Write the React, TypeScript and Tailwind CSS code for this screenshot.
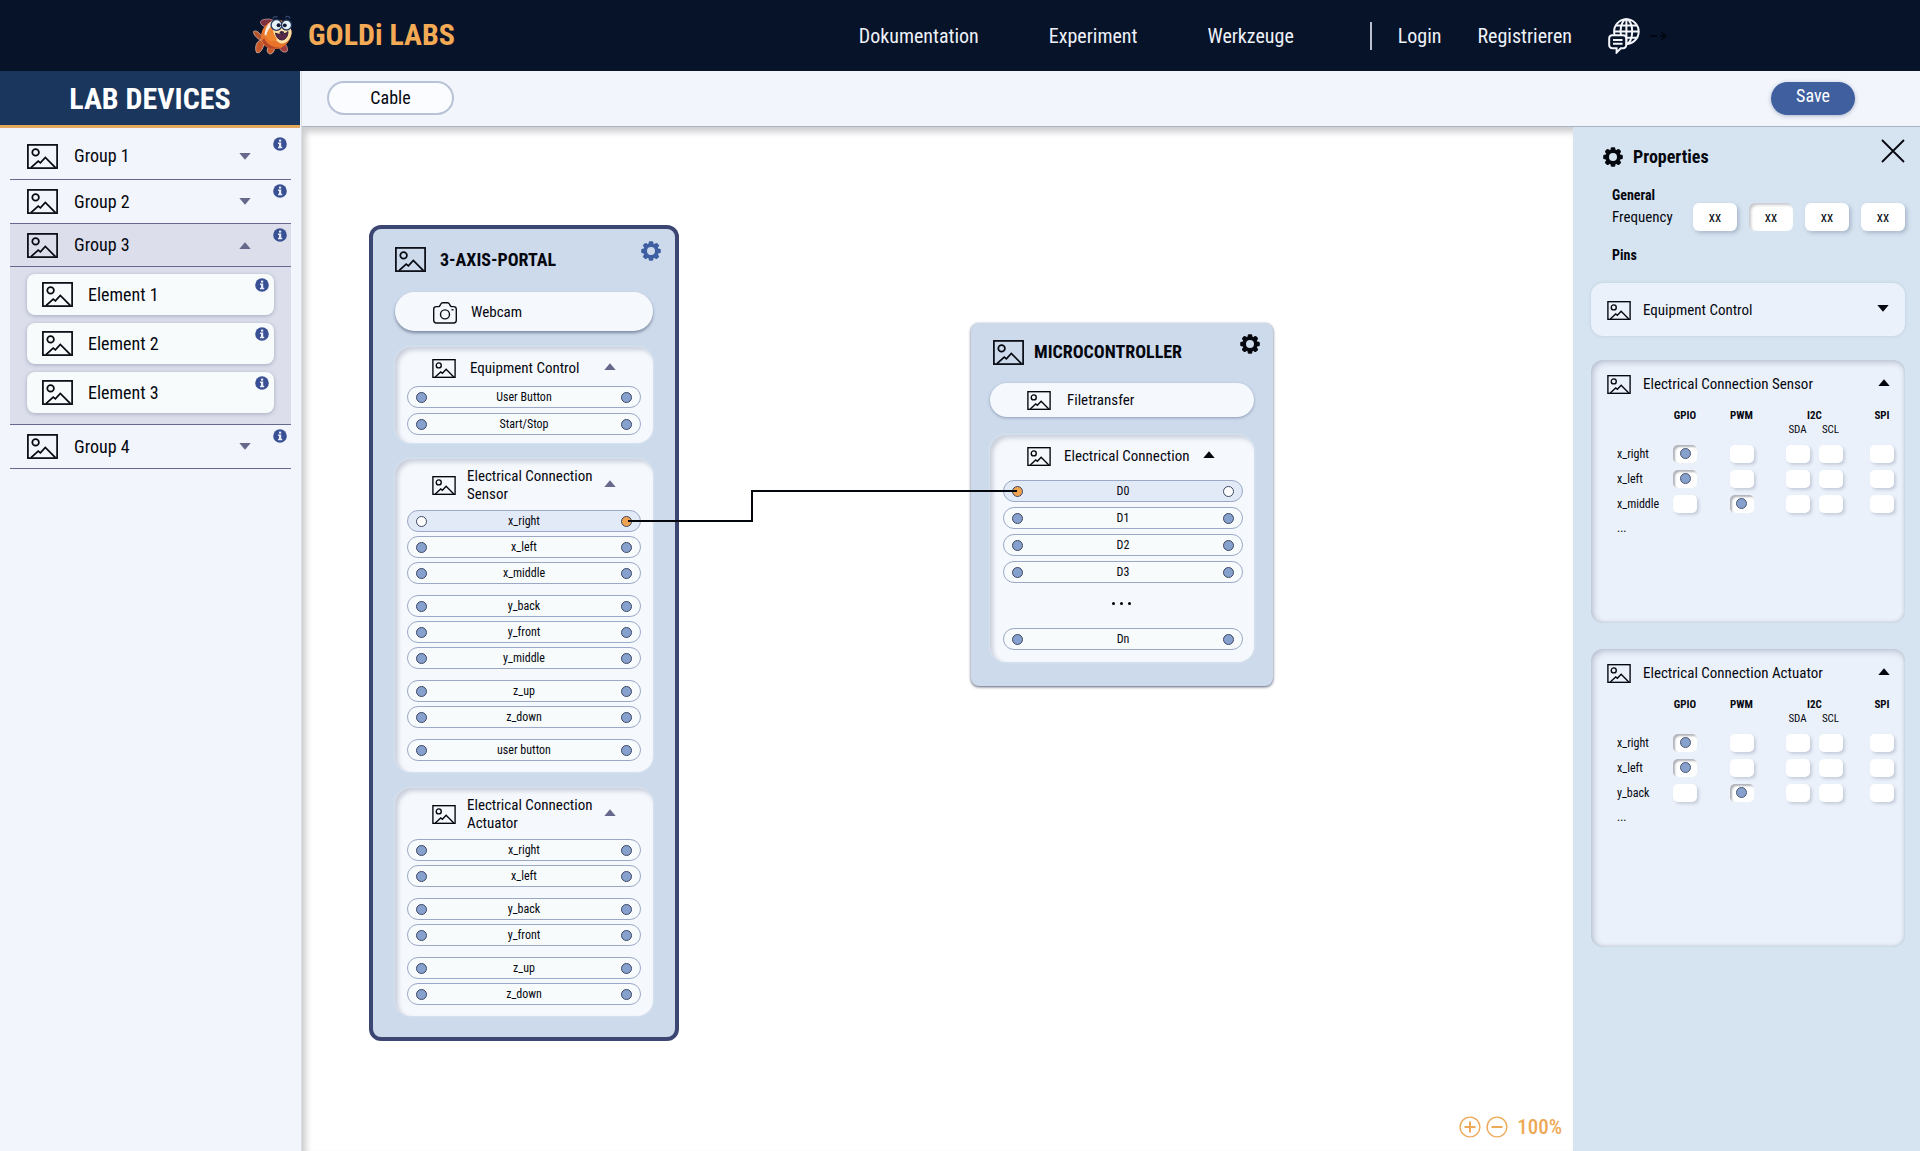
import type { ReactNode } from "react";

type PinState = "idle" | "open" | "wired";
type Pin = { name: string; left?: PinState; right?: PinState };
type PinMode = "GPIO" | "PWM" | "SDA" | "SCL" | "SPI";

const MODES: PinMode[] = ["GPIO", "PWM", "SDA", "SCL", "SPI"];

const EQUIPMENT: Pin[][] = [[{ name: "User Button" }, { name: "Start/Stop" }]];

const SENSOR: Pin[][] = [
  [{ name: "x_right", left: "open", right: "wired" }, { name: "x_left" }, { name: "x_middle" }],
  [{ name: "y_back" }, { name: "y_front" }, { name: "y_middle" }],
  [{ name: "z_up" }, { name: "z_down" }],
  [{ name: "user button" }],
];

const ACTUATOR: Pin[][] = [
  [{ name: "x_right" }, { name: "x_left" }],
  [{ name: "y_back" }, { name: "y_front" }],
  [{ name: "z_up" }, { name: "z_down" }],
];

const DIGITAL: Pin[] = [
  { name: "D0", left: "wired", right: "open" },
  { name: "D1" },
  { name: "D2" },
  { name: "D3" },
];

/* ---------- icons ---------- */

function PictureIcon({ small = false }: { small?: boolean }) {
  return (
    <svg
      viewBox="0 0 31 25"
      className={small ? "h-[19px] w-6 shrink-0" : "h-[25px] w-[31px] shrink-0"}
      fill="none"
      stroke="#05070f"
      strokeWidth={small ? 1.8 : 1.7}
      aria-hidden="true"
    >
      <rect x="0.9" y="0.9" width="29.2" height="23.2" />
      <circle cx="8.6" cy="8.4" r="3.3" />
      <path d="M4 23.6 L11.2 17 L13.4 18.8 L18.3 13.4 L28.4 23.6" />
    </svg>
  );
}

function CameraIcon() {
  return (
    <svg viewBox="0 0 24 22" className="h-[22px] w-6 shrink-0" fill="none" stroke="#0b0e16" strokeWidth="1.4" aria-hidden="true">
      <path d="M3.4 4.6h2.2c.8 0 1.1-.4 1.5-1.2l.7-1.4C8.200 1.200 8.700.8 9.600.8h5c.9 0 1.400.4 1.800 1.200l.7 1.400c.4.8.7 1.200 1.500 1.200h2c1.700 0 2.700 1 2.700 2.700v11c0 1.700-1 2.700-2.700 2.700H3.400C1.700 21 .7 20 .7 18.300v-11c0-1.700 1-2.700 2.700-2.700z" />
      <circle cx="12" cy="12.400" r="4.500" />
      <path d="M18.500 7.800h2" />
    </svg>
  );
}

function GearIcon({ color = "#05070f" }: { color?: string }) {
  return (
    <svg viewBox="-10 -10 20 20" className="size-5 shrink-0" fill={color} aria-hidden="true">
      {[0, 45, 90, 135].map((angle) => (
        <rect key={angle} x="-2.300" y="-9.800" width="4.600" height="19.600" rx="1.300" transform={`rotate(${angle})`} mask="url(#gear-hole)" />
      ))}
      <circle r="5.900" fill="none" stroke={color} strokeWidth="3.800" />
    </svg>
  );
}

function GearDefs() {
  return (
    <svg className="absolute size-0" aria-hidden="true">
      <mask id="gear-hole" maskUnits="userSpaceOnUse" x="-12" y="-12" width="24" height="24">
        <rect x="-12" y="-12" width="24" height="24" fill="white" />
        <circle r="5" fill="black" />
      </mask>
    </svg>
  );
}

function Caret({ up = false, dark = false }: { up?: boolean; dark?: boolean }) {
  return (
    <svg viewBox="0 0 12 7" className="h-[7px] w-3 shrink-0" fill={dark ? "#05070f" : "#66688c"} aria-hidden="true">
      <path d={up ? "M0.300 7 L6 0.200 L11.700 7Z" : "M0.300 0 L6 6.800 L11.700 0Z"} />
    </svg>
  );
}

function InfoIcon() {
  return (
    <svg viewBox="0 0 14 14" className="size-3.5" aria-hidden="true">
      <circle cx="7" cy="7" r="6.800" fill="#3a5094" />
      <rect x="6" y="2.600" width="2.200" height="2" fill="#e9edfa" />
      <path d="M5 5.600h3.200v4.200h1v1.400H5V9.800h1V7H5z" fill="#e9edfa" />
    </svg>
  );
}

function FishLogo() {
  return (
    <svg viewBox="0 0 41 40" className="h-10 w-[41px]" aria-hidden="true">
      <path d="M9 25 C5 24 1 19 1.500 16.500 C4 14.500 8 18 10.500 22Z" fill="#b5532f" stroke="#d9b7a3" strokeWidth="0.800" />
      <path d="M9 25 C4 26 2.500 33 4.500 37.500 C8 39 11 34 12 29Z" fill="#c4572c" stroke="#d9b7a3" strokeWidth="0.800" />
      <path d="M11 11 C7 8 8 5 12 4.500 C16 3.500 20 4 22 6 L16 12Z" fill="#7d3040" stroke="#c9a3a3" strokeWidth="0.700" />
      <path d="M17 31 C14 35 15 38.500 18.500 39 C22 38 23 34 23 30Z" fill="#c4572c" stroke="#e3c1a8" strokeWidth="0.800" />
      <path d="M27 30 C27 35 31 38.500 35 36.500 C36.500 33 34 29 31 27Z" fill="#a03c3c" stroke="#d7a79b" strokeWidth="0.800" />
      <path d="M9 22 C9 14 15 6 24 5 C34 4 40 11 39.500 18 C39 26 32 34 23 34 C14 34 9 29 9 22Z" fill="#e8752a" />
      <path d="M10 26 C13 33 21 35.500 28 32.500 C22 33 15 30 12 23Z" fill="#b5462a" />
      <path d="M21 9 C30 3 40 10 39.600 18 C39 24 34 29 29 28.500 C23 27 18 18 21 9Z" fill="#fbdfa4" />
      <path d="M12.500 20 C13 13 16 8 21 5.500 L23 8 C18 12 16 15 15 21Z" fill="#f6e9dc" />
      <path d="M14 21 C15 16 18 12 21.500 10 C20 15 22 20 25 24 C22 28 16 27 14 21Z" fill="#f0852f" />
      <circle cx="24.500" cy="10" r="5.400" fill="#e6f1f8" stroke="#26385e" strokeWidth="1.300" />
      <circle cx="34.500" cy="10" r="5" fill="#e6f1f8" stroke="#26385e" strokeWidth="1.300" />
      <circle cx="26.600" cy="10.300" r="2" fill="#111a35" />
      <circle cx="32.800" cy="10.300" r="1.900" fill="#111a35" />
      <path d="M21 3.800 C21 1.500 24 .8 25.500 2.500 M33.500 2.500 C34.500 .8 37.500 1 38 3.500" fill="none" stroke="#35466b" strokeWidth="1.300" />
      <path d="M23.500 18 C27 20 33 19.500 36 16.500 C36 22 33 25 29.500 25 C26 24.500 24 21.500 23.500 18Z" fill="#5a2848" stroke="#2e1830" strokeWidth="0.900" />
      <ellipse cx="29.800" cy="17.500" rx="2.300" ry="1.600" fill="#3a2144" />
    </svg>
  );
}

function GlobeIcon() {
  return (
    <svg viewBox="0 0 32 36" className="h-9 w-8" fill="none" stroke="#f4f6fb" strokeWidth="2" aria-hidden="true">
      <circle cx="18.400" cy="13.600" r="12.300" />
      <ellipse cx="18.400" cy="13.600" rx="5.800" ry="12.300" />
      <path d="M18.400 1.300v24.600M6.100 13.600h24.600M8 7.400h20.800M8 19.800h20.800" />
      <path
        d="M4.200 17.200h11a3 3 0 0 1 3 3v7a3 3 0 0 1-3 3h-2.400l-4.200 4.300v-4.300H4.200a3 3 0 0 1-3-3v-7a3 3 0 0 1 3-3z"
        fill="#061329"
      />
      <path d="M5 22h9.500M5 25.800h9.500" />
    </svg>
  );
}

function ZoomIcon({ plus = false }: { plus?: boolean }) {
  return (
    <svg viewBox="0 0 22 22" className="size-[22px]" fill="none" stroke="#eea956" aria-hidden="true">
      <circle cx="11" cy="11" r="9.900" strokeWidth="1.400" />
      <path d={plus ? "M5.500 11h11M11 5.500v11" : "M5.500 11h11"} strokeWidth="2" />
    </svg>
  );
}

/* ---------- top ---------- */

function Header() {
  return (
    <header className="flex h-[71px] shrink-0 items-center bg-[#061329] px-[252px] text-xl text-[#eef1f8]">
      <a href="#home" className="flex items-center gap-[15px] pb-px text-[30px] font-bold text-[#f4aa54]">
        <FishLogo />
        GOLDi LABS
      </a>
      <nav className="ml-auto flex items-center">
        <div className="flex items-center gap-[70px] pr-[76px]">
          <a href="#dokumentation">Dokumentation</a>
          <a href="#experiment">Experiment</a>
          <a href="#werkzeuge">Werkzeuge</a>
        </div>
        <div className="flex items-center gap-9 border-l-2 border-[#b9bfcc] pl-[26px]">
          <a href="#login">Login</a>
          <a href="#registrieren">Registrieren</a>
          <button type="button" aria-label="Sprache" className="-my-1">
            <GlobeIcon />
          </button>
        </div>
        <svg viewBox="0 0 20 10" className="ml-2 h-2.5 w-5" fill="none" stroke="#01060f" strokeWidth="1.500" aria-hidden="true">
          <path d="M2 5h7M12 5h5M13.500 1.500l4.500 3.500l-4.500 3.500" />
        </svg>
      </nav>
    </header>
  );
}

/* ---------- sidebar ---------- */

function InfoButton({ label, className }: { label: string; className: string }) {
  return (
    <button type="button" aria-label={`Info ${label}`} className={`absolute ${className}`}>
      <InfoIcon />
    </button>
  );
}

function GroupRow({ name, open = false, height }: { name: string; open?: boolean; height: string }) {
  return (
    <div className={`relative border-b border-[#67688f] ${height} ${open ? "bg-[#dcdfeb]" : ""}`}>
      <button type="button" aria-expanded={open} className="flex size-full items-center gap-4 pr-10 pl-[17px] text-lg">
        <PictureIcon />
        <span>{name}</span>
        <span className="ml-auto">
          <Caret up={open} />
        </span>
      </button>
      <InfoButton label={name} className="top-1 right-1" />
    </div>
  );
}

function ElementCard({ name }: { name: string }) {
  return (
    <li className="relative rounded-lg bg-[#f8fbfc] shadow-[0_1px_4px_rgba(60,70,110,0.35)]">
      <button type="button" className="flex h-[41px] w-full items-center gap-[15px] pl-[15px] text-lg">
        <PictureIcon />
        {name}
      </button>
      <InfoButton label={name} className="top-1 right-[5px]" />
    </li>
  );
}

function Sidebar() {
  return (
    <aside className="flex w-[302px] shrink-0 flex-col border-r border-[#dadde6] bg-[#f2f5fb]">
      <h1 className="mr-px flex h-[57px] items-center justify-center border-b-[3px] border-[#e3aa5f] bg-[#1a365d] text-[30px] font-bold text-white">
        LAB DEVICES
      </h1>
      <div className="flex flex-col px-2.5 pt-[5px]">
        <GroupRow name="Group 1" height="h-[47px]" />
        <GroupRow name="Group 2" height="h-11" />
        <GroupRow name="Group 3" height="h-[43px]" open />
        <ul className="flex flex-col gap-2 border-b border-[#67688f] bg-[#dcdfeb] px-[17px] pt-[7px] pb-[11px]">
          <ElementCard name="Element 1" />
          <ElementCard name="Element 2" />
          <ElementCard name="Element 3" />
        </ul>
        <GroupRow name="Group 4" height="h-11" />
      </div>
    </aside>
  );
}

/* ---------- canvas nodes ---------- */

function Dot({ state = "idle", label }: { state?: PinState; label: string }) {
  const fill = { idle: "bg-[#86a1ce]", open: "bg-white", wired: "bg-[#efa351]" }[state];
  return <button type="button" aria-label={label} className={`size-[11px] rounded-full border border-[#3d4763] ${fill}`} />;
}

function PinRow({ pin }: { pin: Pin }) {
  const active = pin.left === "wired" || pin.right === "wired";
  return (
    <li
      className={`flex h-[22px] items-center justify-between rounded-full border border-[#9ba9c6] px-2 text-xs ${
        active ? "bg-[#e3eaf7]" : "bg-[#f7fbfc]"
      }`}
    >
      <Dot state={pin.left} label={`${pin.name} links`} />
      <span>{pin.name}</span>
      <Dot state={pin.right} label={`${pin.name} rechts`} />
    </li>
  );
}

function Panel({ children }: { children: ReactNode }) {
  return (
    <section className="rounded-2xl bg-[#f5f8fd] shadow-[inset_3px_3px_4px_rgba(90,100,130,0.28),0_0_3px_rgba(255,255,255,0.5)]">
      {children}
    </section>
  );
}

function PinGroups({ groups }: { groups: Pin[][] }) {
  return (
    <div className="flex flex-col gap-[11px]">
      {groups.map((group) => (
        <ul key={group[0].name} className="flex flex-col gap-1">
          {group.map((pin) => (
            <PinRow key={pin.name} pin={pin} />
          ))}
        </ul>
      ))}
    </div>
  );
}

function ConnectionPanel({ kind, groups }: { kind: string; groups: Pin[][] }) {
  return (
    <Panel>
      <div className="px-3 pb-[11px]">
        <button
          type="button"
          aria-expanded="true"
          className="flex h-[51px] w-full items-center gap-[11px] px-[25px] pt-px text-left leading-[18px]"
        >
          <PictureIcon small />
          <span className="whitespace-nowrap">
            Electrical Connection
            <br />
            {kind}
          </span>
          <span className="ml-auto pb-1">
            <Caret up />
          </span>
        </button>
        <PinGroups groups={groups} />
      </div>
    </Panel>
  );
}

function PortalNode() {
  return (
    <article className="absolute top-[98px] left-[67px] w-[310px] rounded-xl border-4 border-[#3b4672] bg-[#ccdaeb] px-[22px] pb-[21px]">
      <header className="relative flex h-[63px] items-center gap-3.5 pb-0.5">
        <PictureIcon />
        <h2 className="text-lg font-bold">3-AXIS-PORTAL</h2>
        <button type="button" aria-label="Einstellungen 3-AXIS-PORTAL" className="absolute top-3 -right-2">
          <GearIcon color="#3f5fa3" />
        </button>
      </header>
      <button
        type="button"
        className="flex h-[39px] w-full items-center gap-3.5 rounded-full bg-[#f5f8fd] pt-0.5 pl-[38px] shadow-[0_2px_3px_rgba(50,60,90,0.5)]"
      >
        <CameraIcon />
        Webcam
      </button>
      <div className="flex flex-col gap-4 pt-4">
        <Panel>
          <div className="px-3 pb-2">
            <button type="button" aria-expanded="true" className="flex h-[39px] w-full items-center gap-3.5 px-[25px] pt-1">
              <PictureIcon small />
              <span>Equipment Control</span>
              <span className="ml-auto pb-1">
                <Caret up />
              </span>
            </button>
            <ul className="flex flex-col gap-[5px]">
              {EQUIPMENT[0].map((pin) => (
                <PinRow key={pin.name} pin={pin} />
              ))}
            </ul>
          </div>
        </Panel>
        <ConnectionPanel kind="Sensor" groups={SENSOR} />
        <ConnectionPanel kind="Actuator" groups={ACTUATOR} />
      </div>
    </article>
  );
}

function MicrocontrollerNode() {
  return (
    <article className="absolute top-[196px] left-[669px] w-[302px] rounded-lg bg-[#ccdaeb] px-[19px] pb-6 shadow-[0_1px_3px_rgba(40,50,80,0.8)]">
      <header className="relative flex h-[60px] items-center gap-2.5 pb-0.5 pl-[3px]">
        <PictureIcon />
        <h2 className="text-lg font-bold">MICROCONTROLLER</h2>
        <button type="button" aria-label="Einstellungen MICROCONTROLLER" className="absolute top-[11px] right-[-6px]">
          <GearIcon />
        </button>
      </header>
      <button
        type="button"
        className="flex h-[34px] w-full items-center gap-4 rounded-full bg-[#f5f8fd] pl-[37px] shadow-[0_1px_3px_rgba(70,80,120,0.45)]"
      >
        <PictureIcon small />
        Filetransfer
      </button>
      <div className="pt-[18px]">
        <Panel>
          <div className="pt-px pr-[11px] pb-3 pl-[13px]">
            <button type="button" aria-expanded="true" className="flex h-11 w-full items-center gap-[13px] pr-[29px] pb-1 pl-6">
              <PictureIcon small />
              <span className="whitespace-nowrap">Electrical Connection</span>
              <span className="ml-auto pb-1">
                <Caret up dark />
              </span>
            </button>
            <ul className="flex flex-col gap-[5px]">
              {DIGITAL.map((pin) => (
                <PinRow key={pin.name} pin={pin} />
              ))}
            </ul>
            <div className="flex h-[45px] items-center justify-center gap-[5px] pr-1 pb-1" aria-hidden="true">
              <span className="size-[3px] rounded-full bg-black" />
              <span className="size-[3px] rounded-full bg-black" />
              <span className="size-[3px] rounded-full bg-black" />
            </div>
            <ul>
              <PinRow pin={{ name: "Dn" }} />
            </ul>
          </div>
        </Panel>
      </div>
    </article>
  );
}

function Canvas() {
  return (
    <main className="relative min-w-0 flex-1 overflow-hidden bg-white text-[15px] shadow-[inset_4px_5px_6px_rgba(90,90,100,0.3)]">
      <PortalNode />
      <MicrocontrollerNode />
      <svg className="pointer-events-none absolute top-0 left-0 h-[500px] w-[800px]" fill="none" stroke="#05070f" strokeWidth="2" aria-hidden="true">
        <path d="M326 394H450V364H715" />
      </svg>
      <div className="absolute right-[11px] bottom-2 flex items-center gap-[5px] text-[21px] font-medium text-[#eea956]">
        <button type="button" aria-label="Vergrößern">
          <ZoomIcon plus />
        </button>
        <button type="button" aria-label="Verkleinern">
          <ZoomIcon />
        </button>
        <output className="pl-1">100%</output>
      </div>
    </main>
  );
}

/* ---------- properties ---------- */

function PinTable({ title, rows }: { title: string; rows: { pin: string; mode: PinMode }[] }) {
  return (
    <table aria-label={title} className="w-full table-fixed border-collapse text-xs leading-[14px]">
      <colgroup>
        <col className="w-[66px]" />
        <col className="w-14" />
        <col className="w-[57px]" />
        <col className="w-[44px]" />
        <col className="w-[33px]" />
        <col />
      </colgroup>
      <thead className="text-[11px]">
        <tr>
          <td />
          <th scope="col">GPIO</th>
          <th scope="col">PWM</th>
          <th scope="colgroup" colSpan={2} className="pl-3">I2C</th>
          <th scope="col" className="pl-3">SPI</th>
        </tr>
        <tr className="h-[18px] align-top">
          <td colSpan={3} />
          <th scope="col" className="pl-[11px] font-normal">SDA</th>
          <th scope="col" className="font-normal">SCL</th>
          <td />
        </tr>
      </thead>
      <tbody>
        {rows.map((row) => (
          <tr key={row.pin} className="h-[25px]">
            <th scope="row" className="pl-[26px] text-left font-normal whitespace-nowrap">
              {row.pin}
            </th>
            {MODES.map((mode) => (
              <td key={mode} className={mode === "SDA" || mode === "SPI" ? "pl-[11px]" : ""}>
                <input
                  type="radio"
                  name={`${title} ${row.pin}`}
                  aria-label={`${row.pin} ${mode}`}
                  defaultChecked={row.mode === mode}
                  className="mx-auto flex h-[18px] w-6 appearance-none items-center justify-center rounded-[5px] bg-white shadow-[2px_2px_3px_rgba(90,100,130,0.25)] checked:shadow-[inset_2px_2px_2px_rgba(60,65,80,0.4)] checked:before:size-[11px] checked:before:rounded-full checked:before:border checked:before:border-[#4a5570] checked:before:bg-[#86a1ce] checked:before:content-['']"
                />
              </td>
            ))}
          </tr>
        ))}
        <tr className="h-6">
          <td className="pl-[26px]" colSpan={6}>...</td>
        </tr>
      </tbody>
    </table>
  );
}

function PinSection({
  title,
  rows,
  height,
}: {
  title: string;
  rows: { pin: string; mode: PinMode }[];
  height: string;
}) {
  return (
    <section className={`rounded-xl bg-[#ebf1fa] shadow-[inset_2px_2px_6px_rgba(80,95,130,0.35),inset_-1px_-1px_3px_rgba(80,95,130,0.15)] ${height}`}>
      <button type="button" aria-expanded="true" className="flex h-[49px] w-full items-center gap-3 pr-[15px] pl-4">
        <PictureIcon small />
        <span>{title}</span>
        <span className="ml-auto pb-1">
          <Caret up dark />
        </span>
      </button>
      <PinTable title={title} rows={rows} />
    </section>
  );
}

function Properties() {
  return (
    <aside className="w-[347px] shrink-0 bg-[#d6e4f1] pr-[15px] pl-[18px] text-[15px]">
      <header className="flex h-[57px] items-center pt-0.5 pl-3">
        <GearIcon />
        <h2 className="pl-2.5 text-lg font-bold">Properties</h2>
        <button type="button" aria-label="Schließen" className="ml-auto pb-3">
          <svg viewBox="0 0 24 24" className="size-6" fill="none" stroke="#05070f" strokeWidth="1.800" aria-hidden="true">
            <path d="M1 1L23 23M23 1L1 23" />
          </svg>
        </button>
      </header>
      <div className="flex flex-col pl-[21px]">
        <h3 className="text-sm leading-[22px] font-bold">General</h3>
        <div role="group" aria-label="Frequency" className="flex h-[22px] items-center gap-3">
          <span className="mr-auto">Frequency</span>
          {[1, 2, 3, 4].map((n) => (
            <input
              key={n}
              type="text"
              defaultValue="xx"
              aria-label={`Frequency ${n}`}
              className={`h-7 w-11 rounded-md bg-white text-center text-sm ${
                n === 2 ? "shadow-[inset_2px_2px_3px_rgba(90,90,110,0.35)]" : "shadow-[2px_2px_4px_rgba(80,95,130,0.35)]"
              }`}
            />
          ))}
        </div>
        <h3 className="pt-4 pb-[17px] text-sm leading-[22px] font-bold">Pins</h3>
      </div>
      <button
        type="button"
        aria-expanded="false"
        className="flex h-[53px] w-full items-center gap-3 rounded-xl bg-[#ebf1fa] pt-px pr-4 pl-4 shadow-[0_0_3px_rgba(120,135,170,0.3)]"
      >
        <PictureIcon small />
        <span>Equipment Control</span>
        <span className="ml-auto pb-1">
          <Caret dark />
        </span>
      </button>
      <div className="flex flex-col gap-[26px] pt-6">
        <PinSection
          title="Electrical Connection Sensor"
          height="min-h-[263px]"
          rows={[
            { pin: "x_right", mode: "GPIO" },
            { pin: "x_left", mode: "GPIO" },
            { pin: "x_middle", mode: "PWM" },
          ]}
        />
        <PinSection
          title="Electrical Connection Actuator"
          height="min-h-[298px]"
          rows={[
            { pin: "x_right", mode: "GPIO" },
            { pin: "x_left", mode: "GPIO" },
            { pin: "y_back", mode: "PWM" },
          ]}
        />
      </div>
    </aside>
  );
}

export default function App() {
  return (
    <div className="flex min-h-screen flex-col bg-white font-['Roboto_Condensed',Roboto,sans-serif] text-base text-[#05070f]">
      <GearDefs />
      <Header />
      <div className="flex flex-1">
        <Sidebar />
        <div className="flex min-w-0 flex-1 flex-col">
          <div className="flex h-14 items-center justify-between border-b border-[#a9b2c3] bg-[#f2f5fb] pr-[65px] pb-px pl-[25px]">
            <button type="button" className="h-[34px] w-[127px] rounded-full border-2 border-[#b9c3d6] bg-[#fafcff] text-lg leading-7">
              Cable
            </button>
            <button type="button" className="h-[33px] w-[84px] rounded-full bg-[#3f5f9f] pb-1 text-lg text-white shadow-[0_1px_4px_rgba(60,80,130,0.4)]">
              Save
            </button>
          </div>
          <div className="flex flex-1">
            <Canvas />
            <Properties />
          </div>
        </div>
      </div>
    </div>
  );
}
